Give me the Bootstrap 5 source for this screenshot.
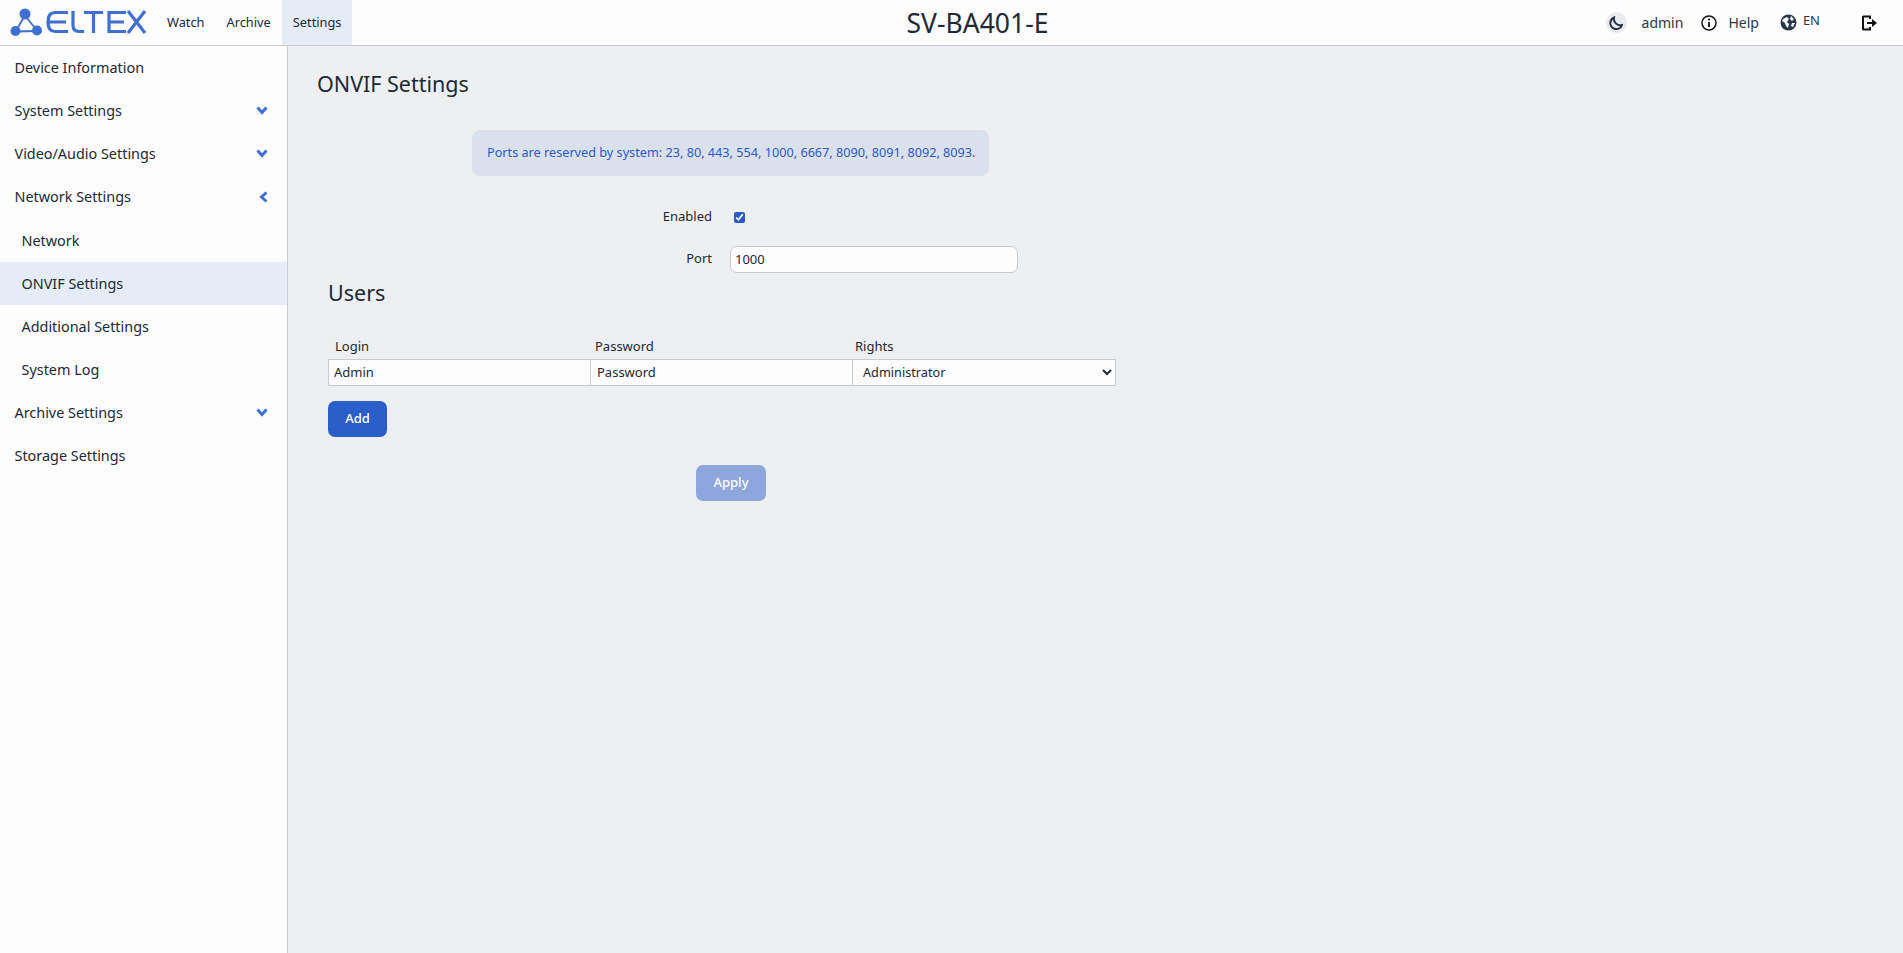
<!DOCTYPE html>
<html lang="en">
<head>
    <meta charset="UTF-8">
    <title>SV-BA401-E</title>
    <link href="https://cdn.jsdelivr.net/npm/bootstrap@5.3.0/dist/css/bootstrap.min.css" rel="stylesheet">
    <style>
        body { font-family: "Noto Sans", sans-serif; font-size: 13px; color: #212936; background: #eeeff1; height: 953px; overflow: hidden; }
        .top-bar { height: 46px; background: #fdfdfd; border-bottom: 1px solid #c9ccd4; }
        .brand-box { width: 156px; padding-left: 10px; }
        .brand-box svg { display: block; }
        .top-link { height: 45px; padding: 0 11px; font-size: 12.8px; color: #212936; text-decoration: none; display: flex; align-items: center; }
        .top-link.on { background: #e6ecf6; }
        .device-title { left: 52px; right: 0; top: 5px; text-align: center; font-size: 26.5px; line-height: 36px; pointer-events: none; }
        .top-right { font-size: 14px; color: #2b3648; margin-right: 26px; }
        .moon-wrap { width: 21px; height: 21px; border-radius: 50%; background: #e9ebef; }
        .side-bar { width: 288px; height: 907px; background: #fdfdfd; border-right: 1px solid #c9ccd4; flex: none; }
        .side-row { height: 43px; padding: 0 19px 0 14.5px; font-size: 14.4px; color: #212936; text-decoration: none; display: flex; align-items: center; justify-content: space-between; }
        .side-row.sub { padding-left: 21.5px; }
        .side-row.on { background: #e6ecf6; }
        .side-row.open-row { height: 44px; }
        .page-title { font-size: 21.5px; font-weight: 400; margin: 24px 0 0 29px; line-height: 28px; }
        .port-note { width: 517px; height: 46px; margin: 32px 0 0 184px; padding: 0 15px; background: #dbe1ec; color: #2a5bc6; border-radius: 8px; font-size: 12.68px; display: flex; align-items: center; white-space: nowrap; }
        .form-line { display: flex; align-items: center; }
        .form-name { width: 424px; text-align: right; }
        .check-line { height: 26px; margin-top: 28px; }
        .check-line input { margin: 0 0 0 22px; width: 11px; height: 11px; accent-color: #2a5bc6; }
        .port-line { height: 26px; margin-top: 16px; }
        .port-input { width: 288px; height: 27px; margin-left: 18px; padding: 0 4px; background: #fdfdfd; border: 1px solid #c9ccd4; border-radius: 7px; font-size: 13px; color: #212936; }
        .users-block { margin-left: 40px; width: 788px; }
        .users-title { font-size: 21.5px; font-weight: 400; margin: 7px 0 0; line-height: 28px; }
        .users-head { display: grid; grid-template-columns: 262px 262px 1fr; margin-top: 28px; height: 24px; align-items: center; }
        .users-head span { padding-left: 7px; }
        .users-head span:nth-child(2) { padding-left: 5px; }
        .users-head span:nth-child(3) { padding-left: 3px; }
        .users-row { display: grid; grid-template-columns: 262px 262px 1fr; }
        .users-cell { height: 27px; margin-right: -1px; padding: 0 5px 2px; background: #fdfdfd; border: 1px solid #c9ccd4; border-radius: 0; font-size: 13px; color: #212936; min-width: 0; }
        .users-cell + .users-cell { padding-left: 6px; }
        select.users-cell { margin-right: 0; padding: 0 2px 2px 6px; font-size: 12.7px; }
        .btn-add, .btn-apply { font-size: 13px; font-weight: 500; height: 36px; padding: 0; border-radius: 7px; color: #fff; border: 0; }
        .btn-add { width: 59px; margin-top: 15px; background: #2a5fca; display: block; }
        .btn-apply { width: 70px; margin: 28px 0 0 368px; background: #8da7dd; display: block; }
    </style>
</head>
<body>
    <header class="top-bar d-flex align-items-center position-relative">
        <div class="brand-box">
            <svg width="138" height="30" viewBox="0 0 138 30">
                <g fill="#3f6fd0">
                    <circle cx="15" cy="6" r="5.500"/>
                    <circle cx="5.500" cy="23" r="5"/>
                    <circle cx="27" cy="22.500" r="5"/>
                </g>
                <path d="M14 9 L7 21 M16 9 L25 20 M8 23.500 L24 23" fill="none" stroke="#3f6fd0" stroke-width="1.800"/>
                <g fill="none" stroke="#3f6fd0" stroke-width="3.200">
                    <path d="M58 4.500 H45 C40 4.500 38 8 38 14 C38 20 40 23.500 45 23.500 H58 M39 14 H56"/>
                    <path d="M63 3 V17 C63 21.500 65 23.500 69 23.500 H74"/>
                    <path d="M74 4.500 H93 M83.500 4.500 V25"/>
                    <path d="M116 4.500 H99 V23.500 H116 M99 14 H114"/>
                    <path d="M118 3 L135 25 M135 3 L118 25"/>
                </g>
            </svg>
        </div>
        <a class="top-link" href="#">Watch</a>
        <a class="top-link" href="#">Archive</a>
        <a class="top-link on" href="#">Settings</a>
        <div class="device-title position-absolute">SV-BA401-E</div>
        <div class="top-right d-flex align-items-center ms-auto">
            <span class="moon-wrap d-flex align-items-center justify-content-center">
                <svg width="14" height="14" viewBox="0 0 14 14"><path d="M5 1.500 A6 6 0 1 0 13 9 A6.500 6.500 0 0 1 5 1.500 Z" fill="none" stroke="#2b3648" stroke-width="2"/></svg>
            </span>
            <span style="margin-left:15px">admin</span>
            <svg style="margin-left:18px" width="16" height="16" viewBox="0 0 16 16"><circle cx="8" cy="8" r="7" fill="none" stroke="#111" stroke-width="1.500"/><path d="M8 7 V12" stroke="#111" stroke-width="1.800"/><circle cx="8" cy="4.500" r="1.100" fill="#111"/></svg>
            <span style="margin-left:11px">Help</span>
            <svg style="margin-left:21px" width="17" height="17" viewBox="0 0 17 17"><circle cx="8.500" cy="8.500" r="8" fill="#2b3648"/><path d="M3 5 L7 3 L9 5 L7 8 L9 10 L8 14 L6 12 L5 9 L2 7 Z M11 2 L14 5 L12 7 L10 5 Z M12 9 L15 9 L13 13 L11 12 Z" fill="#fdfdfd"/></svg>
            <span style="margin-left:6px;font-size:13px;margin-top:-4px">EN</span>
            <svg style="margin-left:42px" width="15" height="16" viewBox="0 0 15 16"><path d="M8 4 V1.500 H1.500 Q1 1.500 1 2 V14 Q1 14.500 1.500 14.500 H8 V12" fill="none" stroke="#111" stroke-width="2"/><path d="M5 7 H10 V4 L15 8 L10 12 V9 H5 Z" fill="#111"/></svg>
        </div>
    </header>
    <div class="d-flex">
        <nav class="side-bar">
            <a class="side-row" href="#">Device Information</a>
            <a class="side-row" href="#">System Settings
                <svg width="12" height="9" viewBox="0 0 12 9"><path d="M1.500 1.500 L6 6.500 L10.500 1.500" fill="none" stroke="#3f6fd0" stroke-width="3"/></svg></a>
            <a class="side-row" href="#">Video/Audio Settings
                <svg width="12" height="9" viewBox="0 0 12 9"><path d="M1.500 1.500 L6 6.500 L10.500 1.500" fill="none" stroke="#3f6fd0" stroke-width="3"/></svg></a>
            <a class="side-row open-row" href="#">Network Settings
                <svg width="9" height="12" viewBox="0 0 9 12"><path d="M7.500 1.500 L2.500 6 L7.500 10.500" fill="none" stroke="#3f6fd0" stroke-width="3"/></svg></a>
            <a class="side-row sub" href="#">Network</a>
            <a class="side-row sub on" href="#">ONVIF Settings</a>
            <a class="side-row sub" href="#">Additional Settings</a>
            <a class="side-row sub" href="#">System Log</a>
            <a class="side-row" href="#">Archive Settings
                <svg width="12" height="9" viewBox="0 0 12 9"><path d="M1.500 1.500 L6 6.500 L10.500 1.500" fill="none" stroke="#3f6fd0" stroke-width="3"/></svg></a>
            <a class="side-row" href="#">Storage Settings</a>
        </nav>
        <main class="flex-grow-1">
            <h1 class="page-title">ONVIF Settings</h1>
            <div class="port-note">Ports are reserved by system: 23, 80, 443, 554, 1000, 6667, 8090, 8091, 8092, 8093.</div>
            <div class="form-line check-line">
                <label class="form-name" for="onvif-on">Enabled</label>
                <input type="checkbox" id="onvif-on" checked>
            </div>
            <div class="form-line port-line">
                <label class="form-name" for="onvif-port">Port</label>
                <input class="port-input" id="onvif-port" value="1000">
            </div>
            <div class="users-block">
                <h2 class="users-title">Users</h2>
                <div class="users-head"><span>Login</span><span>Password</span><span>Rights</span></div>
                <div class="users-row">
                    <input class="users-cell" value="Admin">
                    <input class="users-cell" value="Password">
                    <select class="users-cell"><option>Administrator</option></select>
                </div>
                <button class="btn btn-add" type="button">Add</button>
                <button class="btn btn-apply" type="button">Apply</button>
            </div>
        </main>
    </div>
    <script src="https://cdn.jsdelivr.net/npm/bootstrap@5.3.0/dist/js/bootstrap.bundle.min.js"></script>
</body>
</html>
